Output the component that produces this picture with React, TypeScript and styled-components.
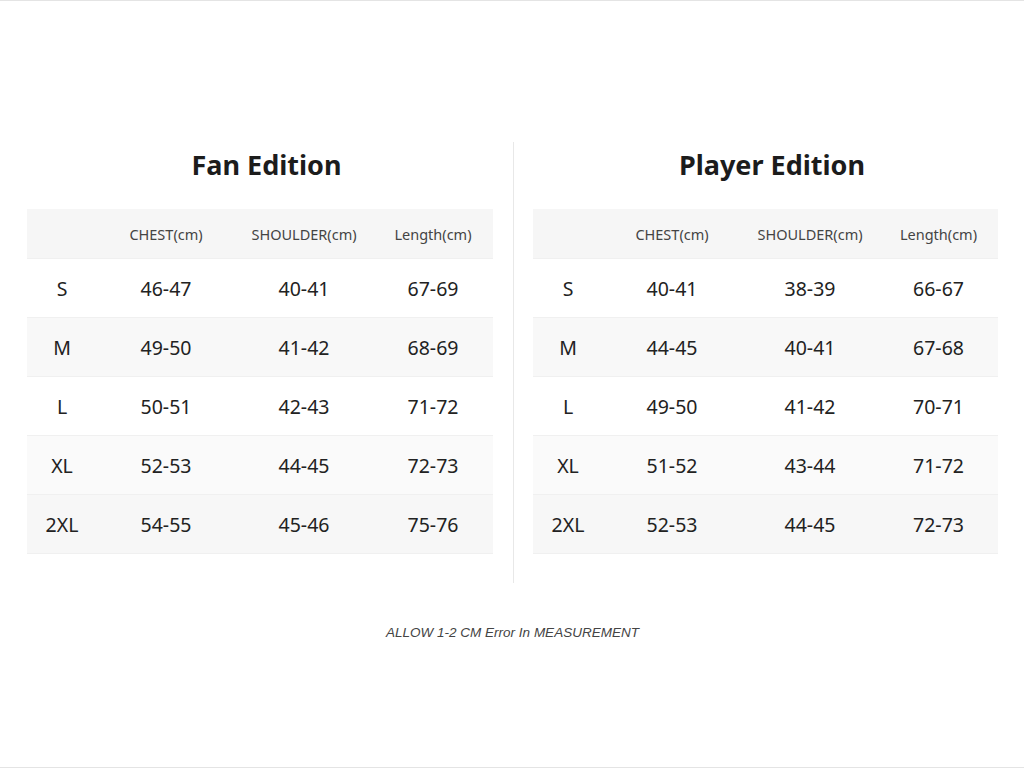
import styled, { createGlobalStyle } from 'styled-components'

const GlobalStyle = createGlobalStyle`
  html, body {
    margin: 0;
    padding: 0;
    background: #ffffff;
  }
  body {
    font-family: "Noto Sans", "Open Sans", sans-serif;
    color: #222222;
  }
`

const Page = styled.div`
  box-sizing: border-box;
  width: 1024px;
  height: 768px;
  border-top: 1px solid #e4e4e4;
  border-bottom: 1px solid #e4e4e4;
  padding: 141px 26px 0 27px;
  display: flex;
  flex-direction: column;
`

const Columns = styled.div`
  display: grid;
  grid-template-columns: 466px 1fr 465px;
`

const Divider = styled.div`
  justify-self: center;
  width: 1px;
  height: 441px;
  background: #e8e8e8;
`

const Section = styled.section`
  display: flex;
  flex-direction: column;
`

const Title = styled.h2`
  margin: 0;
  height: 67px;
  display: flex;
  align-items: center;
  justify-content: center;
  padding: 0 0 22px 13px;
  box-sizing: border-box;
  font-size: 27px;
  font-weight: 700;
  color: #1c1c1c;
`

const Table = styled.div`
  display: flex;
  flex-direction: column;
`

const Row = styled.div<{ $shade: string; $height: number }>`
  box-sizing: border-box;
  display: grid;
  grid-template-columns: 70px 138px 138px 1fr;
  height: ${({ $height }) => $height}px;
  align-items: center;
  background: ${({ $shade }) => $shade};
  border-bottom: 1px solid #f0f0f0;
`

const HeadCell = styled.div`
  text-align: center;
  font-size: 14.5px;
  color: #444444;
`

const Cell = styled.div`
  text-align: center;
  font-size: 19.5px;
  color: #222222;
`

const Note = styled.p`
  margin: 42px 0 0;
  text-align: center;
  font-family: "Liberation Sans", Arial, sans-serif;
  font-style: italic;
  font-size: 13.5px;
  color: #444444;
`

type SizeRow = [string, string, string, string]

const SHADES = ['#ffffff', '#f8f8f8', '#ffffff', '#fafafa', '#f7f7f7']

const FAN: SizeRow[] = [
  ['S', '46-47', '40-41', '67-69'],
  ['M', '49-50', '41-42', '68-69'],
  ['L', '50-51', '42-43', '71-72'],
  ['XL', '52-53', '44-45', '72-73'],
  ['2XL', '54-55', '45-46', '75-76'],
]

const PLAYER: SizeRow[] = [
  ['S', '40-41', '38-39', '66-67'],
  ['M', '44-45', '40-41', '67-68'],
  ['L', '49-50', '41-42', '70-71'],
  ['XL', '51-52', '43-44', '71-72'],
  ['2XL', '52-53', '44-45', '72-73'],
]

const SizeTable = ({ title, rows }: { title: string; rows: SizeRow[] }) => (
  <Section>
    <Title>{title}</Title>
    <Table>
      <Row $shade="#f6f6f6" $height={50}>
        <HeadCell />
        <HeadCell>CHEST(cm)</HeadCell>
        <HeadCell>SHOULDER(cm)</HeadCell>
        <HeadCell>Length(cm)</HeadCell>
      </Row>
      {rows.map((row, i) => (
        <Row key={row[0]} $shade={SHADES[i]} $height={59}>
          {row.map((value, j) => (
            <Cell key={j}>{value}</Cell>
          ))}
        </Row>
      ))}
    </Table>
  </Section>
)

export default function App() {
  return (
    <>
      <GlobalStyle />
      <Page>
        <Columns>
          <SizeTable title="Fan Edition" rows={FAN} />
          <Divider />
          <SizeTable title="Player Edition" rows={PLAYER} />
        </Columns>
        <Note>ALLOW 1-2 CM Error In MEASUREMENT</Note>
      </Page>
    </>
  )
}
